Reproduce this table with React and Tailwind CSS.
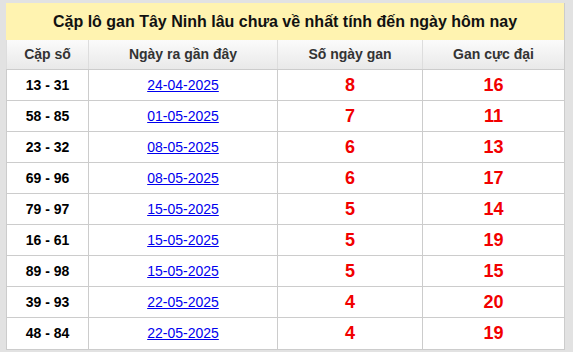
const rows = [
  ['13 - 31', '24-04-2025', 8, 16],
  ['58 - 85', '01-05-2025', 7, 11],
  ['23 - 32', '08-05-2025', 6, 13],
  ['69 - 96', '08-05-2025', 6, 17],
  ['79 - 97', '15-05-2025', 5, 14],
  ['16 - 61', '15-05-2025', 5, 19],
  ['89 - 98', '15-05-2025', 5, 15],
  ['39 - 93', '22-05-2025', 4, 20],
  ['48 - 84', '22-05-2025', 4, 19],
];

export default function App() {
  return (
    <div
      className="w-[573px] h-[352px] bg-[#e2e2e2] pt-[3px] pl-[6px]"
      style={{ fontFamily: '"Liberation Sans", Arial, sans-serif' }}
    >
      <div className="w-[559px] bg-white border-r border-b border-[#cccccc]">
        <div className="h-[37px] bg-[#fff3b0] flex items-center justify-center text-[16px] font-bold text-[#111]">
          Cặp lô gan Tây Ninh lâu chưa về nhất tính đến ngày hôm nay
        </div>
        <div className="grid grid-cols-[82px_189px_145px_1fr] h-[30px] bg-gradient-to-b from-[#fbfbfb] to-[#e9e9e9] border-b border-[#cccccc] text-[14px] font-bold text-[#333]">
          <div className="flex items-center justify-center border-l border-[#dddddd]">Cặp số</div>
          <div className="flex items-center justify-center border-l border-[#dddddd]">Ngày ra gần đây</div>
          <div className="flex items-center justify-center border-l border-[#dddddd]">Số ngày gan</div>
          <div className="flex items-center justify-center border-l border-[#dddddd]">Gan cực đại</div>
        </div>
        {rows.map(([pair, date, days, max], i) => (
          <div
            key={i}
            className={`grid grid-cols-[82px_189px_145px_1fr] h-[31px] ${i < rows.length - 1 ? 'border-b' : ''} border-[#cccccc]`}
          >
            <div className="flex items-center justify-center border-l border-[#cccccc] text-[14px] font-bold text-black">{pair}</div>
            <div className="flex items-center justify-center border-l border-[#cccccc] text-[14px]">
              <a href="#" className="text-[#0000ee] underline">{date}</a>
            </div>
            <div className="flex items-center justify-center border-l border-[#cccccc] text-[18px] font-bold text-[#f20000]">{days}</div>
            <div className="flex items-center justify-center border-l border-[#cccccc] text-[18px] font-bold text-[#f20000]">{max}</div>
          </div>
        ))}
      </div>
    </div>
  );
}
